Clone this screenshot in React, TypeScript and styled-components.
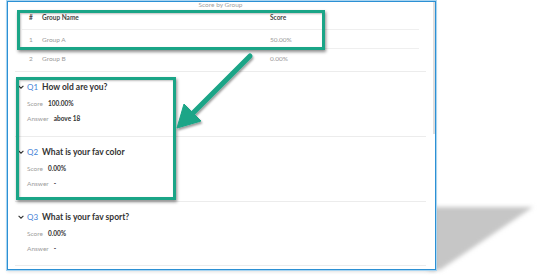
import React from 'react';
import styled, { createGlobalStyle } from 'styled-components';

const GlobalStyle = createGlobalStyle`
  html, body {
    margin: 0;
    padding: 0;
    background: #ffffff;
    font-family: Lato, "Noto Sans", sans-serif;
  }
`;

const Stage = styled.div`
  position: relative;
  width: 543px;
  height: 279px;
  padding: 1px 0 0 7px;
  box-sizing: border-box;
  overflow: hidden;
`;

const Frame = styled.div`
  position: relative;
  z-index: 1;
  width: 429px;
  height: 269px;
  box-sizing: border-box;
  border: 1px solid #2c90d4;
  box-shadow: 0 0 0 1px #a9d5f1, 0 2px 3px rgba(0, 0, 0, 0.12);
  background: #ffffff;
  overflow: hidden;
  padding: 0 9px 0 7px;
`;

const ScrollThumb = styled.div`
  position: absolute;
  top: 0;
  right: 0;
  width: 2px;
  height: 132px;
  background: #dedede;
`;

const Title = styled.div`
  height: 4px;
  line-height: 5px;
  font-size: 6.5px;
  color: #a0a0a0;
  text-align: center;
`;

const Table = styled.div`
  margin: 0 7px 4px 7px;
`;

const Row = styled.div<{ $head?: boolean }>`
  display: grid;
  grid-template-columns: 13px 228px 1fr;
  align-items: center;
  height: ${p => (p.$head ? '23px' : '19px')};
  box-sizing: border-box;
  border-top: ${p => (p.$head ? 'none' : '1px solid #efefef')};
  font-size: 6.5px;
  font-weight: ${p => (p.$head ? 700 : 400)};
  color: ${p => (p.$head ? '#444444' : '#9a9a9a')};
`;

const Cell = styled.div`
  padding-left: 7px;
  white-space: nowrap;
`;

const Section = styled.div<{ $last?: boolean }>`
  height: 65px;
  box-sizing: border-box;
  border-top: 1px solid #ececec;
  border-bottom: ${p => (p.$last ? '1px solid #ececec' : 'none')};
  padding: 9px 0 0 3px;
`;

const QHeader = styled.div`
  display: flex;
  align-items: center;
  height: 12px;
`;

const Chevron = styled.svg`
  width: 6px;
  height: 6px;
  margin-right: 3px;
  flex: none;
`;

const QNum = styled.span`
  width: 15px;
  font-size: 8px;
  color: #3f7fd6;
`;

const QText = styled.span`
  font-size: 8.5px;
  font-weight: 700;
  color: #333333;
`;

const Field = styled.div`
  display: flex;
  align-items: center;
  height: 10px;
  margin-top: 5px;
  padding-left: 9px;
  font-size: 6.5px;
`;

const Label = styled.span`
  color: #9d9d9d;
  margin-right: 5px;
`;

const Value = styled.span`
  color: #333333;
  font-weight: 700;
`;

const Callout = styled.div<{ $x: number; $y: number; $w: number; $h: number }>`
  position: absolute;
  z-index: 3;
  left: ${p => p.$x}px;
  top: ${p => p.$y}px;
  width: ${p => p.$w}px;
  height: ${p => p.$h}px;
  box-sizing: border-box;
  border: 3px solid #1aa587;
  box-shadow: 1px 2px 3px rgba(0, 0, 0, 0.45), inset 1px 1px 2px rgba(0, 0, 0, 0.25);
`;

const Overlay = styled.svg<{ $z: number }>`
  position: absolute;
  left: 0;
  top: 0;
  width: 543px;
  height: 279px;
  z-index: ${p => p.$z};
  pointer-events: none;
`;

const groups = [
  { n: '1', name: 'Group A', score: '50.00%' },
  { n: '2', name: 'Group B', score: '0.00%' },
];

const questions = [
  { q: 'Q1', text: 'How old are you?', score: '100.00%', answer: 'above 18' },
  { q: 'Q2', text: 'What is your fav color', score: '0.00%', answer: '-' },
  { q: 'Q3', text: 'What is your fav sport?', score: '0.00%', answer: '-' },
];

export default function App() {
  return (
    <>
      <GlobalStyle />
      <Stage>
        <Overlay $z={0} viewBox="0 0 543 279">
          <defs>
            <filter id="soft" x="-20%" y="-20%" width="140%" height="140%">
              <feGaussianBlur stdDeviation="2" />
            </filter>
          </defs>
          <polygon points="428,207 533,207 440,270 428,270" fill="#c6c6c6" filter="url(#soft)" />
        </Overlay>

        <Frame>
          <ScrollThumb />
          <Title>Score by Group</Title>
          <Table>
            <Row $head>
              <Cell>#</Cell>
              <Cell>Group Name</Cell>
              <Cell>Score</Cell>
            </Row>
            {groups.map(g => (
              <Row key={g.n}>
                <Cell>{g.n}</Cell>
                <Cell>{g.name}</Cell>
                <Cell>{g.score}</Cell>
              </Row>
            ))}
          </Table>
          {questions.map((q, i) => (
            <Section key={q.q} $last={i === questions.length - 1}>
              <QHeader>
                <Chevron viewBox="0 0 6 6">
                  <polyline points="0.6,1.8 3,4.2 5.4,1.8" fill="none" stroke="#333" strokeWidth="1.1" />
                </Chevron>
                <QNum>{q.q}</QNum>
                <QText>{q.text}</QText>
              </QHeader>
              <Field>
                <Label>Score</Label>
                <Value>{q.score}</Value>
              </Field>
              <Field>
                <Label>Answer</Label>
                <Value>{q.answer}</Value>
              </Field>
            </Section>
          ))}
        </Frame>

        <Callout $x={17} $y={10} $w={308} $h={40} />
        <Callout $x={16} $y={77} $w={160} $h={123} />

        <Overlay $z={4} viewBox="0 0 543 279">
          <defs>
            <filter id="drop" x="-30%" y="-30%" width="160%" height="160%">
              <feDropShadow dx="1" dy="2" stdDeviation="1.2" floodColor="#000" floodOpacity="0.4" />
            </filter>
          </defs>
          <g filter="url(#drop)" fill="#1aa587" stroke="#1aa587">
            <line x1="250" y1="56" x2="190" y2="116" strokeWidth="5" strokeLinecap="round" />
            <polygon points="177,128 184,104 193,113 201,121" strokeWidth="1" strokeLinejoin="round" />
          </g>
        </Overlay>
      </Stage>
    </>
  );
}
